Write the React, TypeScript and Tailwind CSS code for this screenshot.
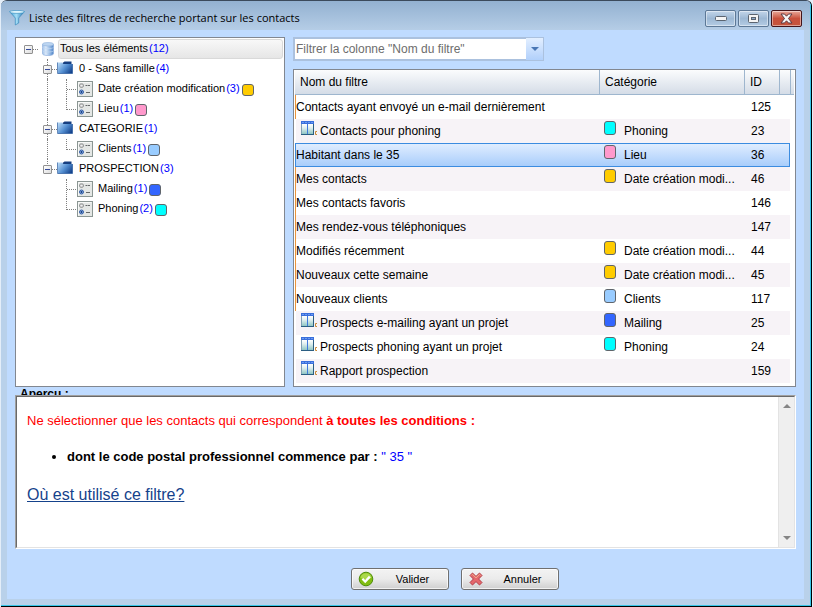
import React from 'react';

const COLORS = {
  yellow: 'bg-[#ffcc00]',
  pink: 'bg-[#ff99cc]',
  sky: 'bg-[#99ccff]',
  blue: 'bg-[#3366ff]',
  cyan: 'bg-[#00ffff]',
};

type ColorName = keyof typeof COLORS;

interface Leaf {
  name: string;
  count: number;
  color: ColorName;
}

interface Family {
  name: string;
  count: number;
  children: Leaf[];
}

interface FilterRow {
  id: number;
  name: string;
  icon?: boolean;
  category?: string;
  color?: ColorName;
}

const FAMILIES: Family[] = [
  {
    name: '0 - Sans famille',
    count: 4,
    children: [
      { name: 'Date création modification', count: 3, color: 'yellow' },
      { name: 'Lieu', count: 1, color: 'pink' },
    ],
  },
  { name: 'CATEGORIE', count: 1, children: [{ name: 'Clients', count: 1, color: 'sky' }] },
  {
    name: 'PROSPECTION',
    count: 3,
    children: [
      { name: 'Mailing', count: 1, color: 'blue' },
      { name: 'Phoning', count: 2, color: 'cyan' },
    ],
  },
];

const ROWS: FilterRow[] = [
  { id: 125, name: 'Contacts ayant envoyé un e-mail dernièrement' },
  { id: 23, name: 'Contacts pour phoning', icon: true, category: 'Phoning', color: 'cyan' },
  { id: 36, name: 'Habitant dans le 35', category: 'Lieu', color: 'pink' },
  { id: 46, name: 'Mes contacts', category: 'Date création modi...', color: 'yellow' },
  { id: 146, name: 'Mes contacts favoris' },
  { id: 147, name: 'Mes rendez-vous téléphoniques' },
  { id: 44, name: 'Modifiés récemment', category: 'Date création modi...', color: 'yellow' },
  { id: 45, name: 'Nouveaux cette semaine', category: 'Date création modi...', color: 'yellow' },
  { id: 117, name: 'Nouveaux clients', category: 'Clients', color: 'sky' },
  { id: 25, name: 'Prospects e-mailing ayant un projet', icon: true, category: 'Mailing', color: 'blue' },
  { id: 24, name: 'Prospects phoning ayant un projet', icon: true, category: 'Phoning', color: 'cyan' },
  { id: 159, name: 'Rapport prospection', icon: true },
];

const SELECTED_ID = 36;

function FunnelIcon() {
  return (
    <svg width="16" height="16" viewBox="0 0 16 16" aria-hidden="true">
      <defs>
        <linearGradient id="funnel" x1="0" x2="1">
          <stop offset="0" stopColor="#3f9fd4" />
          <stop offset="0.45" stopColor="#a5def6" />
          <stop offset="1" stopColor="#1f76b4" />
        </linearGradient>
      </defs>
      <path d="M0.5 1.5 L6.3 8 V15 L9.7 13 V8 L15.5 1.5 Z" fill="url(#funnel)" stroke="#2b7fb5" strokeWidth="0.6" />
      <ellipse cx="8" cy="1.9" rx="7.6" ry="1.5" fill="#dcf4fc" stroke="#3d93c4" strokeWidth="0.7" />
    </svg>
  );
}

function DatabaseIcon() {
  return (
    <svg width="12" height="14" viewBox="0 0 12 14" aria-hidden="true">
      <defs>
        <linearGradient id="db" x1="0" x2="1">
          <stop offset="0" stopColor="#9dbfe8" />
          <stop offset="0.3" stopColor="#dceafa" />
          <stop offset="0.7" stopColor="#8fb5e2" />
          <stop offset="1" stopColor="#4f83c6" />
        </linearGradient>
      </defs>
      <path d="M0.5 2.2 V11.8 C0.5 14.2 11.5 14.2 11.5 11.8 V2.2 Z" fill="url(#db)" stroke="#86aadb" strokeWidth="0.6" />
      <ellipse cx="6" cy="2.2" rx="5.5" ry="1.8" fill="#bcd5f1" stroke="#8fb0dc" strokeWidth="0.6" />
      <path d="M0.5 5.4 C1.5 7 10.5 7 11.5 5.4 M0.5 8.8 C1.5 10.4 10.5 10.4 11.5 8.8" fill="none" stroke="#c4daf3" strokeWidth="0.7" />
    </svg>
  );
}

function FolderIcon() {
  return (
    <svg width="16" height="13" viewBox="0 0 16 13" aria-hidden="true">
      <defs>
        <linearGradient id="folder" x1="0" y1="0.2" x2="1" y2="0.8">
          <stop offset="0" stopColor="#b4d6f4" />
          <stop offset="0.5" stopColor="#5590d2" />
          <stop offset="1" stopColor="#12408a" />
        </linearGradient>
      </defs>
      <path d="M5.5 2 L7.5 0.5 H14.5 V4 H5.5 Z" fill="#173f80" />
      <path d="M0.5 1.5 H5 L6.5 3 H15.5 V12.5 H1 Z" fill="url(#folder)" />
      <path d="M0.5 1.5 V12.5 H15.5 V3" fill="none" stroke="#2a5a9e" strokeWidth="0.7" />
    </svg>
  );
}

function OptionsIcon() {
  return (
    <svg width="16" height="16" viewBox="0 0 16 16" aria-hidden="true">
      <rect x="0.5" y="0.5" width="15" height="15" fill="#e4e7e5" stroke="#8b9693" />
      <path d="M1.5 14.5 V1.5 H14.5" fill="none" stroke="#f7f8f7" />
      <rect x="2.7" y="3" width="3.6" height="3.2" rx="1" fill="#f2f2f2" stroke="#77797a" strokeWidth="0.9" />
      <circle cx="4.5" cy="11" r="2" fill="#8fb4ea" stroke="#355ea6" strokeWidth="1" />
      <circle cx="4.5" cy="11" r="0.9" fill="#163a7c" />
      <path d="M8.5 4.5 H10 M10.5 4.5 H13 M9 11.5 H13" stroke="#66696a" strokeWidth="1" />
    </svg>
  );
}

function ReportIcon() {
  return (
    <svg width="17" height="14" viewBox="0 0 17 14" aria-hidden="true">
      <defs>
        <linearGradient id="sheet" x1="0" x2="0" y1="0" y2="1">
          <stop offset="0" stopColor="#ffffff" />
          <stop offset="0.4" stopColor="#dfeeee" />
          <stop offset="1" stopColor="#8fc6c4" />
        </linearGradient>
      </defs>
      <rect x="0" y="0" width="13" height="14" fill="#2b5e82" />
      <rect x="0" y="3" width="12" height="10" fill="url(#sheet)" />
      <path d="M0.5 3 V13" stroke="#7f9fb4" />
      <rect x="0" y="0" width="13" height="3" fill="#3a6fdc" />
      <path d="M1 1.5 H12" stroke="#6c9bf0" strokeDasharray="2 1" />
      <path d="M6.5 3 V13" stroke="#3f78dc" />
      <path d="M16 10.5 H14.5 V13.5 H16" fill="none" stroke="#c98a3a" strokeWidth="1" />
    </svg>
  );
}

function CheckIcon() {
  return (
    <svg width="16" height="16" viewBox="0 0 16 16" aria-hidden="true">
      <circle cx="8" cy="8" r="6.8" fill="#82bd12" stroke="#4f8d0b" strokeWidth="1" />
      <path d="M2.4 7 A5.7 5.7 0 0 1 13.6 7 Q8 9 2.4 7" fill="#abd84b" />
      <path d="M4.4 7.8 L7.2 10.6 L11.8 5.6" fill="none" stroke="#ffffff" strokeWidth="2.3" />
    </svg>
  );
}

function CrossIcon() {
  return (
    <svg width="14" height="14" viewBox="0 0 14 14" aria-hidden="true">
      <path
        d="M1 3.5 L3.5 1 L7 4.4 L10.5 1 L13 3.5 L9.6 7 L13 10.5 L10.5 13 L7 9.6 L3.5 13 L1 10.5 L4.4 7 Z"
        fill="#e4686c"
        stroke="#b53b45"
      />
      <path d="M2.5 3.2 L3.5 2.4 L7 5.8 L10.5 2.4 L11.6 3.4" fill="none" stroke="#f6b08d" />
    </svg>
  );
}

function Swatch({ color, tall = false }: { color: ColorName; tall?: boolean }) {
  return (
    <span
      className={`inline-block w-3 shrink-0 rounded-[3px] border border-[#60656b] ${tall ? 'h-3.5' : 'h-3'} ${COLORS[color]}`}
    />
  );
}

function Expander({ label }: { label: string }) {
  return (
    <button
      type="button"
      aria-label={`Réduire ${label}`}
      className="absolute left-[5px] top-[6px] flex size-[9px] items-center justify-center rounded-[1px] border border-[#919191] bg-linear-to-br from-white to-[#dcdcdc]"
    >
      <span className="h-px w-[5px] bg-[#344a9c]" />
    </button>
  );
}

/* One indent column of the tree, with its dotted connectors. */
function Guide({
  line = 'none',
  branch = false,
  children,
}: {
  line?: 'none' | 'half' | 'full';
  branch?: boolean;
  children?: React.ReactNode;
}) {
  const height = line === 'half' ? 'h-[11px]' : 'h-full';
  return (
    <span className="relative flex h-full w-[19px] shrink-0">
      <span className={`w-[10px] border-dotted border-[#808080] ${height} ${line === 'none' ? '' : 'border-r'}`} />
      <span className={`h-[11px] w-[9px] border-dotted border-[#808080] ${branch ? 'border-b' : ''}`} />
      {children}
    </span>
  );
}

function NodeText({ name, count }: { name: string; count: number }) {
  return (
    <span className="flex gap-px pb-px">
      <span>{name}</span>
      <span className="text-[#0000ff]">({count})</span>
    </span>
  );
}

function FilterTree() {
  return (
    <nav aria-label="Familles de filtres" className="w-[270px] shrink-0 border border-[#828790] bg-white py-px pl-[3px] pr-px text-[11px]">
      <div className="flex h-5 items-center">
        <Guide branch>
          <Expander label="Tous les éléments" />
        </Guide>
        <span className="flex w-5 shrink-0 justify-center">
          <DatabaseIcon />
        </span>
        <span className="flex h-5 flex-1 items-center rounded-[3px] border border-[#d9d9d9] bg-linear-to-b from-[#f8f8f8] to-[#e6e6e6] pl-px">
          <NodeText name="Tous les éléments" count={12} />
        </span>
      </div>
      <ul>
        {FAMILIES.map((family, index) => {
          const last = index === FAMILIES.length - 1;
          return (
            <li key={family.name}>
              <div className="flex h-5 items-center">
                <Guide />
                <Guide line={last ? 'half' : 'full'} branch>
                  <Expander label={family.name} />
                </Guide>
                <span className="w-[22px] shrink-0 pb-[3px]">
                  <FolderIcon />
                </span>
                <NodeText name={family.name} count={family.count} />
              </div>
              <ul>
                {family.children.map((leaf, leafIndex) => (
                  <li key={leaf.name} className="flex h-5 items-center">
                    <Guide />
                    <Guide line={last ? 'none' : 'full'} />
                    <Guide line={leafIndex === family.children.length - 1 ? 'half' : 'full'} branch />
                    <span className="w-[22px] shrink-0 pl-px">
                      <OptionsIcon />
                    </span>
                    <NodeText name={leaf.name} count={leaf.count} />
                    <span className="ml-[2px] flex pt-[2px]">
                      <Swatch color={leaf.color} />
                    </span>
                  </li>
                ))}
              </ul>
            </li>
          );
        })}
      </ul>
    </nav>
  );
}

function FilterTable() {
  const head = 'h-[25px] border-b border-[#9eb6ce] text-left font-normal';
  return (
    <div className="border border-[#828790] bg-white pb-[3px] pl-px pr-px">
      <table className="w-full table-fixed border-separate border-spacing-0 text-[12px]">
        <colgroup>
          <col />
          <col className="w-[145px]" />
          <col className="w-[35px]" />
          <col className="w-[11px]" />
          <col className="w-[4px]" />
        </colgroup>
        <thead className="bg-linear-to-b from-[#fbfcfd] to-[#d3dbe6]">
          <tr>
            <th className={`${head} pl-[5px]`}>Nom du filtre</th>
            <th className={`${head} border-l pl-[5px]`}>Catégorie</th>
            <th className={`${head} border-l pl-[5px]`}>ID</th>
            <th className={`${head} border-l`} />
            <th className={`${head} border-l`} />
          </tr>
        </thead>
        <tbody>
          {ROWS.map((row, index) => {
            const selected = row.id === SELECTED_ID;
            const band = selected
              ? 'border-y border-[#3c8ce0] bg-linear-to-b from-[#e0edff] to-[#a9cdfb]'
              : index % 2 === 1
                ? 'bg-[#f7f3f7]'
                : 'bg-white';
            const edge = selected ? 'border-l' : row.icon ? 'border-l border-white' : 'border-l border-[#e8943c]';
            return (
              <tr key={row.id} aria-selected={selected}>
                <td className={`h-6 p-0 ${band} ${edge}`}>
                  <div className="flex items-center">
                    {row.icon && (
                      <span className="ml-[5px] mr-[2px] pb-[6px]">
                        <ReportIcon />
                      </span>
                    )}
                    <span>{row.name}</span>
                  </div>
                </td>
                <td className={`h-6 p-0 pl-[5px] ${band}`}>
                  {row.category && row.color && (
                    <div className="flex items-center gap-2">
                      <span className="flex pb-[6px]">
                        <Swatch color={row.color} tall />
                      </span>
                      <span>{row.category}</span>
                    </div>
                  )}
                </td>
                <td className={`h-6 p-0 pl-[7px] ${band}`}>{row.id}</td>
                <td className={`h-6 p-0 ${band} ${selected ? 'border-r' : ''}`} />
                <td className="p-0" />
              </tr>
            );
          })}
        </tbody>
      </table>
    </div>
  );
}

function CaptionButton({ label, close = false, children }: { label: string; close?: boolean; children: React.ReactNode }) {
  const tone = close
    ? 'border-[#43141a] from-[#e9a99b] via-[#c9503c] via-50% to-[#c4553c]'
    : 'border-[#5d7896] from-[#c3d6ea] via-[#9db8d4] via-50% to-[#b4cce4]';
  return (
    <button
      type="button"
      aria-label={label}
      className={`flex h-[17px] w-[31px] items-center justify-center rounded-[2px] border bg-linear-to-b shadow-[inset_0_0_0_1px_rgba(255,255,255,0.45)] ${tone}`}
    >
      {children}
    </button>
  );
}

function TitleBar() {
  return (
    <header className="flex h-[29px] items-center justify-between bg-linear-to-b from-[#93b1d1] to-[#b5cde6] pl-2 pr-2 pt-[5px]">
      <h1 className="flex items-center gap-1 font-['Open_Sans',sans-serif] text-[11px]">
        <FunnelIcon />
        Liste des filtres de recherche portant sur les contacts
      </h1>
      <div className="flex gap-[2px]">
        <CaptionButton label="Réduire">
          <svg width="12" height="5" viewBox="0 0 12 5" aria-hidden="true">
            <rect x="0.5" y="0.5" width="11" height="4" rx="1" fill="#f4f4f4" stroke="#5b6470" />
          </svg>
        </CaptionButton>
        <CaptionButton label="Agrandir">
          <svg width="11" height="9" viewBox="0 0 11 9" aria-hidden="true">
            <rect x="0.5" y="0.5" width="10" height="8" rx="1" fill="#f4f4f4" stroke="#5b6470" />
            <rect x="3.5" y="3.5" width="4" height="2" fill="#8ca8c8" stroke="#5b6470" />
          </svg>
        </CaptionButton>
        <CaptionButton label="Fermer" close>
          <svg width="13" height="11" viewBox="0 0 13 11" aria-hidden="true">
            <path
              d="M1 1 H4.5 L6.5 3.2 L8.5 1 H12 L8.5 5.5 L12 10 H8.5 L6.5 7.8 L4.5 10 H1 L4.5 5.5 Z"
              fill="#f6f6f6"
              stroke="#5c3b42"
            />
          </svg>
        </CaptionButton>
      </div>
    </header>
  );
}

function ScrollBar() {
  return (
    <div className="flex w-4 shrink-0 flex-col items-center justify-between border-l border-[#e3e3e3] bg-[#efefef] py-[7px]">
      <svg width="8" height="4" viewBox="0 0 8 4" aria-hidden="true">
        <path d="M4 0 L8 4 H0 Z" fill="#858585" />
      </svg>
      <svg width="8" height="4" viewBox="0 0 8 4" aria-hidden="true">
        <path d="M0 0 H8 L4 4 Z" fill="#858585" />
      </svg>
    </div>
  );
}

function Preview() {
  return (
    <section aria-labelledby="preview-title">
      <h2 id="preview-title" className="h-2 overflow-hidden pl-[5px] text-[12px] font-bold leading-[14px]">
        Aperçu :
      </h2>
      <div className="border border-b-white border-l-[#a0a0a0] border-r-white border-t-[#a0a0a0]">
        <div className="flex min-h-[152px] border border-b-[#e3e3e3] border-l-[#696969] border-r-[#e3e3e3] border-t-[#696969] bg-white">
          <div className="flex-1 pl-[10px] pt-4 text-[13px]">
            <p className="leading-4 text-[#ff0000]">
              Ne sélectionner que les contacts qui correspondent <b>à toutes les conditions :</b>
            </p>
            <ul className="mt-5 list-disc pl-10 leading-4">
              <li>
                <b>dont le code postal professionnel commence par :</b> <span className="text-[#0000ff]">" 35 "</span>
              </li>
            </ul>
            <p className="mt-5 text-[16px] leading-5">
              <a href="#usage" className="text-[#15428b] underline">
                Où est utilisé ce filtre?
              </a>
            </p>
          </div>
          <ScrollBar />
        </div>
      </div>
    </section>
  );
}

function ActionButton({ icon, children }: { icon: React.ReactNode; children: React.ReactNode }) {
  return (
    <button
      type="button"
      className="flex h-[22px] w-[98px] items-center rounded-[3px] border border-[#707070] bg-linear-to-b from-[#f3f3f3] via-[#ebebeb] via-50% to-[#cfcfcf] pl-[6px] text-[11px] shadow-[inset_0_0_0_1px_rgba(255,255,255,0.7)]"
    >
      <span className="flex w-4 justify-center">{icon}</span>
      <span className="flex-1 pl-1">{children}</span>
    </button>
  );
}

export default function App() {
  return (
    <div className="min-h-screen bg-[#e4eef9] px-px font-['Liberation_Sans',Arial,sans-serif] text-black">
      <div className="flex min-h-screen flex-col overflow-hidden rounded-t-[6px] border-b border-r border-t border-black border-t-[#3b4a5c] bg-[#b9d1ea]">
        <div className="flex flex-1 flex-col border-b border-r border-[#38c6e8]">
          <TitleBar />
          <main className="mx-[6px] mb-[6px] flex flex-1 flex-col bg-[#bfdbff] px-2 pt-[7px]">
            <div className="flex gap-2">
              <FilterTree />
              <div className="flex min-w-0 flex-1 flex-col gap-2">
                <div className="relative w-[251px]">
                  <select
                    aria-label="Colonne à filtrer"
                    className="block h-6 w-full appearance-none border-2 border-[#abc1de] bg-white pl-px text-[12px] text-[#6d6d6d]"
                  >
                    <option>Filtrer la colonne "Nom du filtre"</option>
                  </select>
                  <span className="pointer-events-none absolute inset-y-px right-px flex w-[17px] items-center justify-center bg-linear-to-b from-[#e3efff] to-[#b1d0fb]">
                    <svg width="8" height="4" viewBox="0 0 8 4" aria-hidden="true">
                      <path d="M0 0 H8 L4 4 Z" fill="#4a77b4" />
                    </svg>
                  </span>
                </div>
                <FilterTable />
              </div>
            </div>
            <Preview />
            <div className="flex justify-center gap-3 pb-2 pl-[98px] pt-[19px]">
              <ActionButton icon={<CheckIcon />}>Valider</ActionButton>
              <ActionButton icon={<CrossIcon />}>Annuler</ActionButton>
            </div>
          </main>
        </div>
      </div>
    </div>
  );
}
